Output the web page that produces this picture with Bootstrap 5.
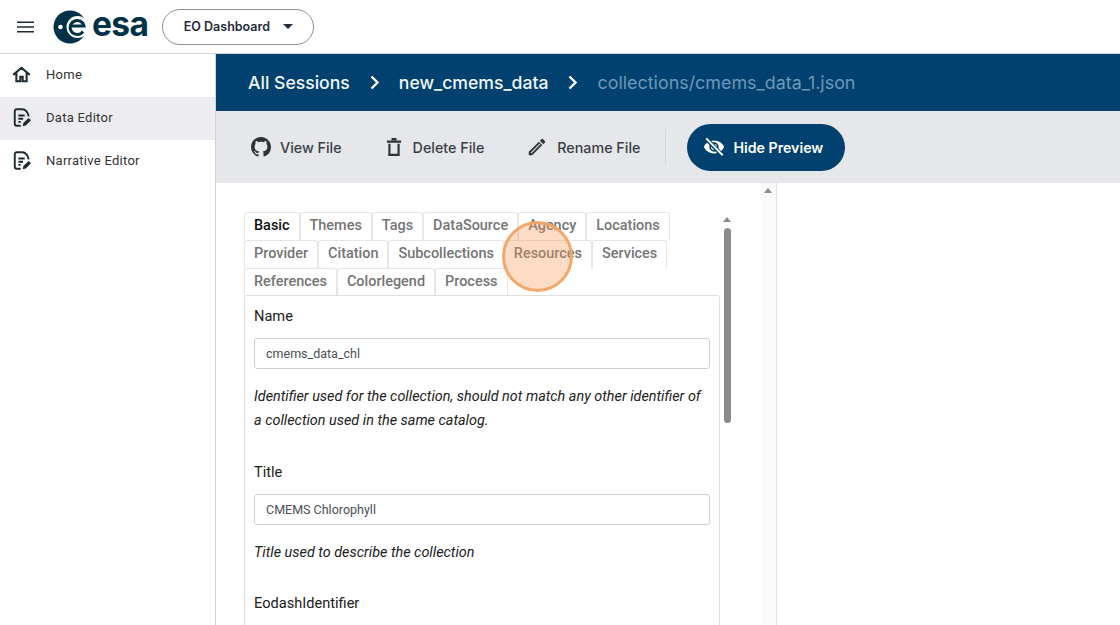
<!doctype html>
<html lang="en"><head><meta charset="utf-8"><title>EO Dashboard editor</title>
<link href="https://cdn.jsdelivr.net/npm/bootstrap@5.3.0/dist/css/bootstrap.min.css" rel="stylesheet">
<style>
html,body{height:625px;overflow:hidden;background:#fff}
body{font-family:Roboto,sans-serif;color:#212121;position:relative}
.top-bar{height:54px;border-bottom:1px solid #d4d4d4;padding-left:16px}
.logo-mark{margin-left:2px}
.brand-word{font:700 33.500px/1 Inter,sans-serif;color:#003247;letter-spacing:-.6px;margin-left:0;margin-top:-4px}
.dash-btn{width:152px;height:36px;border:1px solid #8a8f94;border-radius:18px;margin-left:14px;font:600 12.500px Inter,sans-serif;color:#1f2d3a;background:#fff;padding:0}
.caret-mark{width:0;height:0;border:5px solid transparent;border-top-color:#1f2d3a;border-bottom:0;margin-left:13px}
.side-col{width:216px;flex:none;border-right:1px solid #d4d4d4;height:571px}
.side-item{height:43px;padding:0 0 2px 12px;font:400 13px Roboto,sans-serif;letter-spacing:.27px;color:#333;gap:15px}
.side-on{background:#edecf1}
.crumb-bar{height:57px;background:#00416f;padding-left:32px;font:500 17.600px Inter,sans-serif;color:#f2f6f9}
.crumb-sep{margin:0 17px 0 17px}
.crumb-dim{color:#6f98b8;font-weight:400;font-size:17.900px}
.tool-bar{height:72px;background:#e6e7ea;padding-left:35px;font:500 14.300px Inter,sans-serif;color:#3a3f45}
.tool-item{margin-right:42px;gap:9px}
.tool-rule{width:1px;height:36px;background:#d3d4d7;margin:0 21px 0 -17px}
.hide-btn{height:47px;width:158px;border:0;border-radius:24px;background:#00416f;color:#fff;font:600 14.200px Inter,sans-serif;padding:0 0 0 16px}
.pane-wrap{height:442px;overflow:hidden}
.left-pane{width:561px;flex:none;border-right:1px solid #e4e4e4;padding:29px 0 0 28px;position:relative}
.outer-track{position:absolute;right:0;top:0;bottom:0;width:15px;background:#fafafa}
.up-arrow{width:0;height:0;border:4.500px solid transparent;border-bottom:5px solid #8a8a8a;border-top:0;position:absolute}
.outer-track .up-arrow{left:3px;top:5px}
.inner-track{position:absolute;left:504px;top:29px;width:14px;bottom:0}
.inner-track .up-arrow{left:2.500px;top:5px}
.inner-thumb{position:absolute;left:4px;top:16px;width:7px;height:195px;background:#8a8a8a;border-radius:4px}
.form-box{width:476px}
.tab-row{display:flex;height:28px}
.tab-item{height:28px;padding:0 9px;font:500 14.450px/25px Roboto,sans-serif;color:#757575;border:1px solid #e6e6e6;border-bottom:0;border-radius:3px 3px 0 0}
.tab-on{color:#111}
.field-panel{border:1px solid #e0e0e0;border-radius:3px;padding:10px 9px 0 9px;margin-top:-1px;height:400px;position:relative;background:#fff}
.field-label{font:400 14.600px/20px Roboto,sans-serif;color:#212121;margin-bottom:12px}
.field-input{height:31px;border:1px solid #cfd2d4;border-radius:3px;padding:0 11px;font:400 12.500px/29px Roboto,sans-serif;color:#4a4f54;margin-bottom:16px}
.field-help{font:italic 400 14.400px/24px Roboto,sans-serif;color:#212121;margin:.5px 0 28.500px}
.touch-mark{position:absolute;left:502px;top:221px;width:71px;height:71px;border-radius:50%;background:rgba(250,150,80,.33);border:3px solid rgba(243,164,100,.95)}
</style></head>
<body>
<header class="top-bar d-flex align-items-center">
 <svg width="19" height="14" viewBox="0 0 19 14" class="me-3"><path d="M1 1.500h17v1.600h-17zM1 6.200h17v1.600h-17zM1 10.900h17v1.600h-17z" fill="#1d2a33"/></svg>
 <svg width="39" height="34" viewBox="0 0 39 34" class="logo-mark"><circle cx="17" cy="17" r="16.500" fill="#003247"/><circle cx="24.500" cy="17" r="11" fill="#fff"/><circle cx="7.500" cy="17" r="2.300" fill="#fff"/><path d="M30 21.500a7 7 0 1 1 1-5.500H18.500" fill="none" stroke="#003247" stroke-width="3"/></svg>
 <span class="brand-word">esa</span>
 <button class="dash-btn d-flex align-items-center justify-content-center">EO Dashboard<span class="caret-mark"></span></button>
</header>
<div class="d-flex">
 <nav class="side-col">
  <div class="side-item d-flex align-items-center"><svg width="19" height="19" viewBox="0 0 24 24" fill="none" stroke="#1f2a30" stroke-width="2.600"><path d="M1.500 12.500 12 3.500l10.500 9M5.500 10v10.500h5V15h3v5.500h5V10"/></svg>Home</div>
  <div class="side-item side-on d-flex align-items-center"><svg width="19" height="19" viewBox="0 0 24 24" fill="none" stroke="#1f2a30" stroke-width="2.400"><path d="M13 1.500H6a2.500 2.500 0 0 0-2.500 2.500v16A2.500 2.500 0 0 0 6 22.500h5M13 1.500c4 0 7.500 4 8 9M8 9.500h8M8 13.500h6M8 17.500h3"/><path d="m13.500 23 1-4.500 6.500-6 3 3-6.500 6.500z" fill="#1f2a30" stroke="none"/></svg>Data Editor</div>
  <div class="side-item d-flex align-items-center"><svg width="19" height="19" viewBox="0 0 24 24" fill="none" stroke="#1f2a30" stroke-width="2.400"><path d="M13 1.500H6a2.500 2.500 0 0 0-2.500 2.500v16A2.500 2.500 0 0 0 6 22.500h5M13 1.500c4 0 7.500 4 8 9M8 9.500h8M8 13.500h6M8 17.500h3"/><path d="m13.500 23 1-4.500 6.500-6 3 3-6.500 6.500z" fill="#1f2a30" stroke="none"/></svg>Narrative Editor</div>
 </nav>
 <main class="flex-grow-1">
  <div class="crumb-bar d-flex align-items-center"><span>All Sessions</span><svg class="crumb-sep" width="15" height="15" viewBox="0 0 15 15" fill="none" stroke="#fff" stroke-width="2.400"><path d="m4.500 1.500 6 6-6 6"/></svg><span>new_cmems_data</span><svg class="crumb-sep" width="15" height="15" viewBox="0 0 15 15" fill="none" stroke="#fff" stroke-width="2.400"><path d="m4.500 1.500 6 6-6 6"/></svg><span class="crumb-dim">collections/cmems_data_1.json</span></div>
  <div class="tool-bar d-flex align-items-center">
   <span class="tool-item d-flex align-items-center"><svg width="20" height="20" viewBox="0 0 16 16" fill="#2f3338"><path d="M8 0C3.580 0 0 3.580 0 8c0 3.540 2.290 6.530 5.470 7.590.4.070.55-.17.55-.38 0-.19-.010-.82-.010-1.490-2.010.37-2.530-.49-2.690-.94-.09-.23-.48-.94-.82-1.130-.28-.15-.68-.52-.010-.53.630-.010 1.080.58 1.230.82.720 1.210 1.870.87 2.330.66.070-.52.280-.87.510-1.070-1.780-.2-3.640-.89-3.640-3.950 0-.87.310-1.590.820-2.150-.08-.2-.36-1.020.08-2.120 0 0 .67-.21 2.200.82.640-.18 1.320-.27 2-.27s1.360.09 2 .27c1.530-1.040 2.200-.82 2.200-.82.440 1.100.160 1.920.08 2.120.51.560.82 1.270.82 2.150 0 3.070-1.870 3.750-3.650 3.950.29.250.54.730.54 1.480 0 1.070-.010 1.930-.010 2.200 0 .21.150.46.550.38A8.010 8.010 0 0 0 16 8c0-4.420-3.580-8-8-8z"/></svg>View File</span>
   <span class="tool-item d-flex align-items-center"><svg width="20" height="20" viewBox="0 0 24 24" fill="none" stroke="#2f3338" stroke-width="2.600"><path d="M3.500 5.500h17M9 2.500h6M6.500 8v13.500h11V8"/></svg>Delete File</span>
   <span class="tool-item d-flex align-items-center"><svg width="22" height="22" viewBox="0 0 24 24" fill="#2f3338"><path d="M3 17.250V21h3.750L17.800 9.940l-3.750-3.750zM20.700 7.040a1 1 0 0 0 0-1.410l-2.340-2.340a1 1 0 0 0-1.410 0l-1.830 1.830 3.750 3.750z"/><path d="M5 18.200 15 8.200l.8.800-10 10z" fill="#e6e7ea"/></svg>Rename File</span>
   <span class="tool-rule"></span>
   <button class="hide-btn d-flex align-items-center gap-2"><svg width="22" height="22" viewBox="0 0 24 24" fill="#fff"><path d="M12 5C7 5 2.700 8 1 12c1.700 4 6 7 11 7s9.300-3 11-7c-1.700-4-6-7-11-7z"/><circle cx="12" cy="12" r="4.200" fill="none" stroke="#00416f" stroke-width="1.800"/><path d="M3 2.500 21 21" stroke="#00416f" stroke-width="4.500"/><path d="M3.500 2.500 21.500 21" stroke="#fff" stroke-width="2"/></svg>Hide Preview</button>
  </div>
  <div class="pane-wrap d-flex">
   <section class="left-pane">
    <div class="outer-track"><span class="up-arrow"></span></div>
    <div class="inner-track"><span class="up-arrow"></span><span class="inner-thumb"></span></div>
    <div class="form-box">
     <div class="tab-row"><span class="tab-item tab-on">Basic</span><span class="tab-item">Themes</span><span class="tab-item">Tags</span><span class="tab-item">DataSource</span><span class="tab-item">Agency</span><span class="tab-item">Locations</span></div>
     <div class="tab-row"><span class="tab-item">Provider</span><span class="tab-item">Citation</span><span class="tab-item">Subcollections</span><span class="tab-item">Resources</span><span class="tab-item">Services</span></div>
     <div class="tab-row"><span class="tab-item">References</span><span class="tab-item">Colorlegend</span><span class="tab-item">Process</span></div>
     <div class="field-panel">
      <div class="field-label">Name</div>
      <div class="field-input">cmems_data_chl</div>
      <p class="field-help">Identifier used for the collection, should not match any other identifier of a collection used in the same catalog.</p>
      <div class="field-label">Title</div>
      <div class="field-input">CMEMS Chlorophyll</div>
      <p class="field-help">Title used to describe the collection</p>
      <div class="field-label">EodashIdentifier</div>
     </div>
    </div>
   </section>
  </div>
 </main>
</div>
<div class="touch-mark"></div>
</body></html>
